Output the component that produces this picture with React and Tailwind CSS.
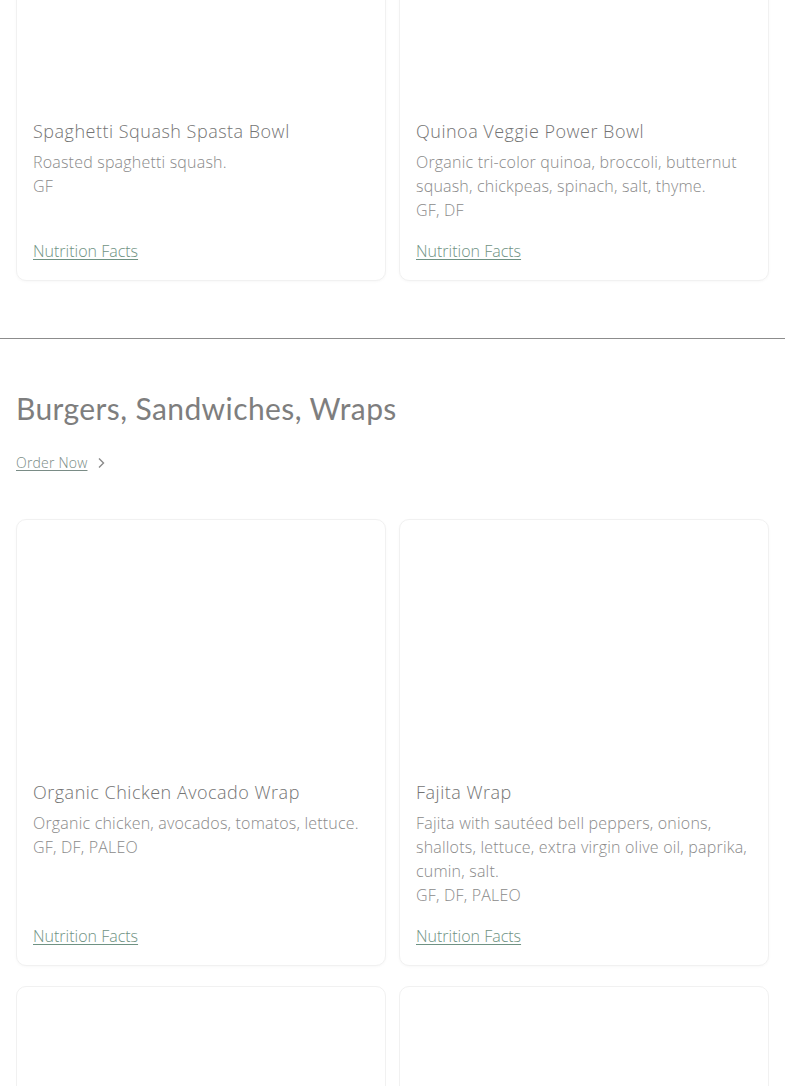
import React from "react";

const topItems = [
  {
    name: "Spaghetti Squash Spasta Bowl",
    desc: "Roasted spaghetti squash.",
    tags: "GF",
  },
  {
    name: "Quinoa Veggie Power Bowl",
    desc: "Organic tri-color quinoa, broccoli, butternut squash, chickpeas, spinach, salt, thyme.",
    tags: "GF, DF",
  },
];

const wraps = [
  {
    name: "Organic Chicken Avocado Wrap",
    desc: "Organic chicken, avocados, tomatos, lettuce.",
    tags: "GF, DF, PALEO",
  },
  {
    name: "Fajita Wrap",
    desc: "Fajita with sautéed bell peppers, onions, shallots, lettuce, extra virgin olive oil, paprika, cumin, salt.",
    tags: "GF, DF, PALEO",
  },
];

const MenuCard = ({ item }) => (
  <div className="flex flex-col rounded-[10px] border border-[#f1f1f1] bg-white shadow-[0_1px_3px_rgba(0,0,0,0.03)]">
    {/* photo slot, left blank */}
    <div className="h-[240px]" />
    <div className="flex flex-1 flex-col px-[16px] pt-5 pb-[17px]">
      <h3 className="text-[18px] leading-6 tracking-[0.5px] text-[#747474]">{item.name}</h3>
      <p className="mt-[7px] text-[16px] leading-6 tracking-[0.2px] text-[#8a8a8a]">{item.desc}</p>
      <p className="text-[16px] leading-6 tracking-[0.2px] text-[#8a8a8a]">{item.tags}</p>
      <a href="#" className="mt-auto pt-[17px] text-[16px] leading-6 text-[#6f9283] underline underline-offset-2">
        Nutrition Facts
      </a>
    </div>
  </div>
);

export default function App() {
  return (
    <div className="min-h-[1086px] overflow-hidden bg-white font-['Open_Sans',sans-serif] font-light">
      <div className="mt-[-142px] grid grid-cols-2 gap-[13px] px-4">
        {topItems.map((item) => (
          <MenuCard key={item.name} item={item} />
        ))}
      </div>

      <hr className="mt-[57px] border-t border-[#8c8c8c]" />

      <section className="px-4 pt-[49px]">
        <h2 className="font-['Lato',sans-serif] text-[30px] font-normal leading-10 tracking-[0.4px] text-[#7e7e7e]">
          Burgers, Sandwiches, Wraps
        </h2>
        <a href="#" className="mt-[25px] flex items-center gap-[10px] text-[14px] leading-5 tracking-[0.2px] text-[#7a8c86]">
          <span className="underline underline-offset-2">Order Now</span>
          <svg width="8" height="12" viewBox="0 0 8 12" fill="none" stroke="#8a8a8a" strokeWidth="1.4">
            <path d="M2 1.5 6.5 6 2 10.5" />
          </svg>
        </a>
      </section>

      <div className="mt-[46px] grid grid-cols-2 gap-x-[13px] gap-y-5 px-4">
        {wraps.map((item) => (
          <MenuCard key={item.name} item={item} />
        ))}
        <div className="h-[240px] rounded-[10px] border border-[#f1f1f1]" />
        <div className="h-[240px] rounded-[10px] border border-[#f1f1f1]" />
      </div>
    </div>
  );
}
